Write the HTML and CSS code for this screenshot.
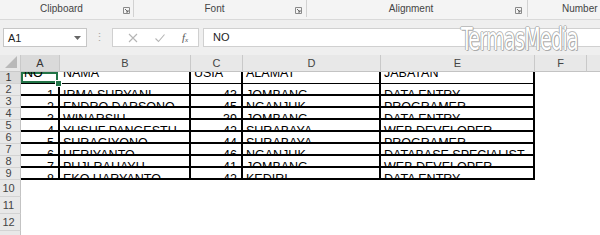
FILE: index.html
```html
<!DOCTYPE html>
<html>
<head>
<meta charset="utf-8">
<link rel="stylesheet" href="styles.css">
</head>
<body>
<div class="app">
  <div class="ribbon">
    <div class="grp g1"><span class="glabel">Clipboard</span><span class="launch"><svg width="7" height="7" viewBox="0 0 7 7"><path d="M0.5 0.5H6.5V6.5H0.5Z" fill="none" stroke="#8a8a8a" stroke-width="1"/><path d="M2 2L5 5M5 3V5H3" fill="none" stroke="#6a6a6a" stroke-width="1"/></svg></span></div>
    <div class="grp g2"><span class="glabel">Font</span><span class="launch"><svg width="7" height="7" viewBox="0 0 7 7"><path d="M0.5 0.5H6.5V6.5H0.5Z" fill="none" stroke="#8a8a8a" stroke-width="1"/><path d="M2 2L5 5M5 3V5H3" fill="none" stroke="#6a6a6a" stroke-width="1"/></svg></span></div>
    <div class="grp g3"><span class="glabel">Alignment</span><span class="launch"><svg width="7" height="7" viewBox="0 0 7 7"><path d="M0.5 0.5H6.5V6.5H0.5Z" fill="none" stroke="#8a8a8a" stroke-width="1"/><path d="M2 2L5 5M5 3V5H3" fill="none" stroke="#6a6a6a" stroke-width="1"/></svg></span></div>
    <div class="grp g4"><span class="glabel">Number</span></div>
  </div>
  <div class="fbar">
    <div class="namebox"><span>A1</span><svg class="dd" width="7" height="4" viewBox="0 0 7 4"><path d="M0 0H7L3.5 4Z" fill="#666"/></svg></div>
    <div class="dots">⋮</div>
    <div class="fbtns">
      <svg width="12" height="12" viewBox="0 0 12 12"><path d="M2 2L10 10M10 2L2 10" stroke="#b5b5b5" stroke-width="1.1" fill="none"/></svg>
      <svg width="12" height="12" viewBox="0 0 12 12"><path d="M1.5 6.5L4.5 9.5L10.5 2.5" stroke="#b5b5b5" stroke-width="1.1" fill="none"/></svg>
      <span class="fx">f<sub>x</sub></span>
    </div>
    <div class="finput">NO</div>
    <div class="wm">TermasMedia</div>
  </div>
  <div class="gap"></div>
  <div class="sheet">
    <div class="corner"><svg width="12" height="12" viewBox="0 0 12 12"><path d="M12 0V12H0Z" fill="#b9b9b9"/></svg></div>
    <div class="ch sel">A</div><div class="ch">B</div><div class="ch">C</div><div class="ch">D</div><div class="ch">E</div><div class="ch">F</div><div class="ch last"></div>

    <div class="rh sel">1</div>
    <div class="c t top a1"><span class="clip"><span class="tx up">NO</span></span><i class="handle"></i></div>
    <div class="c t top"><span class="tx up">NAMA</span></div>
    <div class="c t top"><span class="tx up">USIA</span></div>
    <div class="c t top"><span class="tx up">ALAMAT</span></div>
    <div class="c t top"><span class="tx up">JABATAN</span></div>
    <div class="c"></div><div class="c"></div>

    <div class="rh">2</div>
    <div class="c t num"><span class="tx">1</span></div><div class="c t"><span class="tx">IRMA SURYANI</span></div><div class="c t num"><span class="tx">43</span></div><div class="c t"><span class="tx">JOMBANG</span></div><div class="c t"><span class="tx">DATA ENTRY</span></div><div class="c"></div><div class="c"></div>

    <div class="rh">3</div>
    <div class="c t num"><span class="tx">2</span></div><div class="c t"><span class="tx">ENDRO DARSONO</span></div><div class="c t num"><span class="tx">45</span></div><div class="c t"><span class="tx">NGANJUK</span></div><div class="c t"><span class="tx">PROGRAMER</span></div><div class="c"></div><div class="c"></div>

    <div class="rh">4</div>
    <div class="c t num"><span class="tx">3</span></div><div class="c t"><span class="tx">WINARSIH</span></div><div class="c t num"><span class="tx">39</span></div><div class="c t"><span class="tx">JOMBANG</span></div><div class="c t"><span class="tx">DATA ENTRY</span></div><div class="c"></div><div class="c"></div>

    <div class="rh">5</div>
    <div class="c t num"><span class="tx">4</span></div><div class="c t"><span class="tx">YUSUF PANGESTU</span></div><div class="c t num"><span class="tx">42</span></div><div class="c t"><span class="tx">SURABAYA</span></div><div class="c t"><span class="tx">WEB DEVELOPER</span></div><div class="c"></div><div class="c"></div>

    <div class="rh">6</div>
    <div class="c t num"><span class="tx">5</span></div><div class="c t"><span class="tx">SURAGIYONO</span></div><div class="c t num"><span class="tx">44</span></div><div class="c t"><span class="tx">SURABAYA</span></div><div class="c t"><span class="tx">PROGRAMER</span></div><div class="c"></div><div class="c"></div>

    <div class="rh">7</div>
    <div class="c t num"><span class="tx">6</span></div><div class="c t"><span class="tx">HERIYANTO</span></div><div class="c t num"><span class="tx">46</span></div><div class="c t"><span class="tx">NGANJUK</span></div><div class="c t"><span class="tx">DATABASE SPECIALIST</span></div><div class="c"></div><div class="c"></div>

    <div class="rh">8</div>
    <div class="c t num"><span class="tx">7</span></div><div class="c t"><span class="tx">PUJI RAHAYU</span></div><div class="c t num"><span class="tx">41</span></div><div class="c t"><span class="tx">JOMBANG</span></div><div class="c t"><span class="tx">WEB DEVELOPER</span></div><div class="c"></div><div class="c"></div>

    <div class="rh">9</div>
    <div class="c t num"><span class="tx">8</span></div><div class="c t"><span class="tx">EKO HARYANTO</span></div><div class="c t num"><span class="tx">42</span></div><div class="c t"><span class="tx">KEDIRI</span></div><div class="c t"><span class="tx">DATA ENTRY</span></div><div class="c"></div><div class="c"></div>

    <div class="rh big">10</div><div class="c"></div><div class="c"></div><div class="c"></div><div class="c"></div><div class="c"></div><div class="c"></div><div class="c"></div>
    <div class="rh big">11</div><div class="c"></div><div class="c"></div><div class="c"></div><div class="c"></div><div class="c"></div><div class="c"></div><div class="c"></div>
    <div class="rh big">12</div><div class="c"></div><div class="c"></div><div class="c"></div><div class="c"></div><div class="c"></div><div class="c"></div><div class="c"></div>
    <div class="rh big">13</div><div class="c"></div><div class="c"></div><div class="c"></div><div class="c"></div><div class="c"></div><div class="c"></div><div class="c"></div>
  </div>
</div>
</body>
</html>
```
FILE: styles.css
```css
html, body {
  margin: 0;
  padding: 0;
  width: 600px;
  height: 235px;
  overflow: hidden;
  background: #ffffff;
  font-family: "Liberation Sans", Arial, sans-serif;
}
.app {
  width: 600px;
  height: 235px;
  overflow: hidden;
  display: flex;
  flex-direction: column;
}
.ribbon {
  display: flex;
  height: 19px;
  background: #f4f4f4;
  border-bottom: 1px solid #d9d9d9;
  flex: none;
}
.grp {
  display: flex;
  align-items: flex-end;
  height: 17px;
  border-right: 1px solid #d2d2d2;
  box-sizing: border-box;
  padding-bottom: 2px;
}
.g1 { width: 134px; padding-right: 3px; }
.g2 { width: 173px; padding-right: 4px; }
.g3 { width: 221px; padding-right: 5px; }
.g4 { flex: 1; border-right: none; padding-left: 34px; }
.glabel {
  flex: 1;
  text-align: center;
  font-size: 10px;
  color: #444;
  line-height: 12px;
}
.g4 .glabel { flex: none; text-align: left; }
.launch {
  width: 7px;
  height: 7px;
  display: flex;
  margin-bottom: 1px;
}
.fbar {
  position: relative;
  display: flex;
  align-items: center;
  height: 19px;
  padding-top: 8px;
  background: #efefef;
  flex: none;
}
.namebox {
  width: 84px;
  height: 19px;
  box-sizing: border-box;
  margin-left: 3px;
  background: #fff;
  border: 1px solid #c6c6c6;
  display: flex;
  align-items: center;
  justify-content: space-between;
  padding: 0 5px 0 4px;
  font-size: 11px;
  color: #222;
}
.dots {
  width: 25px;
  text-align: center;
  color: #a8a8a8;
  font-size: 11px;
}
.fbtns {
  width: 87px;
  height: 19px;
  box-sizing: border-box;
  background: #fff;
  border: 1px solid #d0d0d0;
  display: flex;
  align-items: center;
  justify-content: space-around;
  padding: 0 2px 0 6px;
}
.fx {
  font-family: "Liberation Serif", serif;
  font-style: italic;
  font-size: 11px;
  color: #555;
}
.fx sub { font-size: 7px; vertical-align: -1px; }
.finput {
  flex: 1;
  height: 19px;
  box-sizing: border-box;
  margin-left: 4px;
  background: #fff;
  border: 1px solid #d0d0d0;
  border-right: none;
  padding-left: 9px;
  font-size: 11px;
  line-height: 17px;
  color: #222;
}
.wm {
  position: absolute;
  left: 461px;
  top: 2px;
  font-family: "DejaVu Sans Condensed", "DejaVu Sans", sans-serif;
  font-size: 32px;
  line-height: 34px;
  color: #ffffff;
  transform: scaleX(0.66);
  transform-origin: left top;
  text-shadow: 0 0 1px #777, 1px 1px 0 #b0b0b0, -1px 0 0 #c4c4c4, 0 -1px 0 #c4c4c4, 1px 0 0 #c0c0c0;
  letter-spacing: -1px;
}
.gap {
  height: 8px;
  background: #efefef;
  flex: none;
}
.sheet {
  display: grid;
  grid-template-columns: 21px 39px 131px 52px 138px 154px 52px 13px;
  grid-template-rows: 17px 12px repeat(8, 12px) 17px 17px 17px 17px;
  flex: none;
}
.corner {
  background: #e8e8e8;
  border-right: 1px solid #c9c9c9;
  border-bottom: 1px solid #c9c9c9;
  box-sizing: border-box;
  display: flex;
  align-items: flex-end;
  justify-content: flex-end;
  padding: 0 3px 3px 0;
}
.ch {
  background: #e8e8e8;
  border-right: 1px solid #c9c9c9;
  border-bottom: 1px solid #c3c3c3;
  box-sizing: border-box;
  font-size: 11px;
  color: #444;
  text-align: center;
  line-height: 17px;
}
.ch.sel { background: #dadada; color: #333; }
.ch.last { border-right: none; }
.rh {
  background: #e8e8e8;
  border-right: 1px solid #c3c3c3;
  border-bottom: 1px solid #d3d3d3;
  box-sizing: border-box;
  font-size: 11px;
  color: #444;
  text-align: center;
  line-height: 11px;
  overflow: hidden;
  padding-right: 3px;
}
.rh.sel { background: #dadada; color: #333; }
.rh.big { line-height: 17px; }
.c {
  box-sizing: border-box;
  overflow: hidden;
  background: #fff;
  white-space: nowrap;
  position: relative;
}
.t {
  border-right: 2px solid #000;
  border-bottom: 2px solid #000;
  padding-left: 3px;
}
.t.top { border-bottom: 1px solid #000; }
.num { text-align: right; padding-right: 4px; padding-left: 0; }
.tx {
  display: block;
  font-size: 12.5px;
  line-height: 12.5px;
  color: #000;
  margin-top: 5px;
}
.tx.up { margin-top: -5px; }
.a1 {
  overflow: visible;
  border-right-color: transparent;
  border-bottom-color: #217346;
  box-shadow: inset 0 0 0 2px #217346;
  z-index: 2;
}
.clip {
  display: block;
  height: 11px;
  overflow: hidden;
}
.handle {
  position: absolute;
  right: -4px;
  bottom: -4px;
  width: 5px;
  height: 5px;
  background: #217346;
  border: 1px solid #fff;
}
```
